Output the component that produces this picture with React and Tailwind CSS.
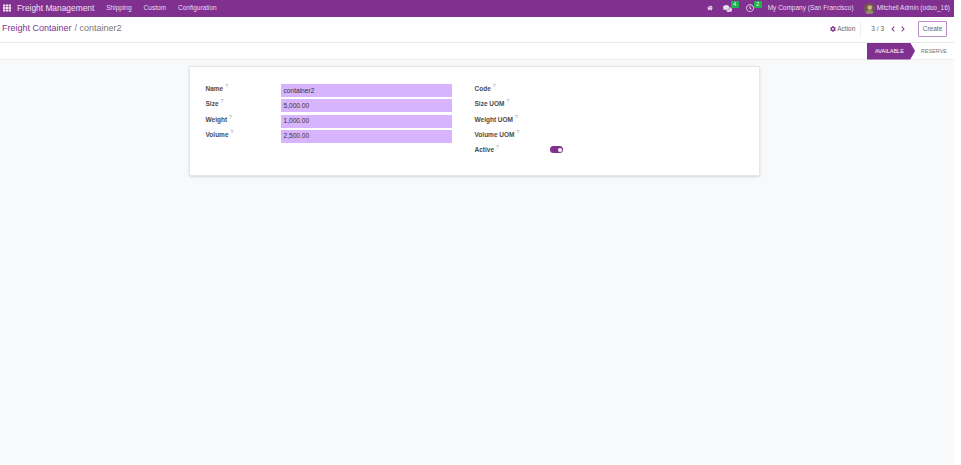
import React from "react";
import { FaCog, FaHome, FaComments, FaTh, FaChevronLeft, FaChevronRight, FaRegClock } from "react-icons/fa";

const leftFields = [
  { label: "Name", value: "container2" },
  { label: "Size", value: "5,000.00" },
  { label: "Weight", value: "1,000.00" },
  { label: "Volume", value: "2,500.00" },
];
const rightFields = ["Code", "Size UOM", "Weight UOM", "Volume UOM"];

const Label = ({ text }) => (
  <span className="flex items-start mt-[1px] text-[6.5px] font-bold text-[#4c4c4c] leading-[8px]">
    {text}
    <span className="text-[#8fa9ba] font-normal text-[5px] leading-[5px] ml-[2px] -mt-[1px]">?</span>
  </span>
);

const Badge = ({ n }) => (
  <span className="absolute -top-[3px] left-[8px] w-[8px] h-[7px] bg-[#22b24c] text-white text-[5px] leading-[7px] text-center rounded-[1px]">
    {n}
  </span>
);

const App = () => {
  return (
    <div className="w-[961px] h-[465px] bg-white flex font-['Liberation_Sans',sans-serif] overflow-hidden">
      <div className="w-[954px] h-[464px] flex flex-col">
        {/* Navbar */}
        <div className="h-[17px] bg-[#80308f] text-white flex items-center shrink-0 pl-[3px] pr-[4px] pb-[1px]">
          <FaTh size={8} className="text-[#f3e6f5]" />
          <span className="ml-[6px] text-[8.4px] text-[#f0e2f2]">Freight Management</span>
          <div className="flex ml-[12px] gap-[12px] text-[6.5px] text-[#ecdcef]">
            <span>Shipping</span>
            <span>Custom</span>
            <span>Configuration</span>
          </div>
          <div className="ml-auto flex items-center text-[6.5px] text-[#ecdcef]">
            <FaHome size={6} />
            <span className="relative ml-[10px] w-[9px] h-[8px] flex items-center">
              <FaComments size={9} />
              <Badge n="4" />
            </span>
            <span className="relative ml-[14px] w-[8px] h-[8px] flex items-center">
              <FaRegClock size={8} />
              <Badge n="2" />
            </span>
            <span className="ml-[14px]">My Company (San Francisco)</span>
            <svg className="ml-[10px]" width="11" height="11" viewBox="0 0 11 11">
              <circle cx="5.5" cy="5.5" r="5.5" fill="#6f5a46" />
              <circle cx="5.8" cy="4.6" r="2.4" fill="#cdb08f" />
              <path d="M1.5 10c.6-2.4 2.2-3 4-3s3.4.6 4 3l-2 1h-4z" fill="#8f8a6a" />
            </svg>
            <span className="ml-[2px]">Mitchell Admin (odoo_16)</span>
          </div>
        </div>

        {/* Breadcrumb row */}
        <div className="h-[26px] flex items-center border-b border-[#e8e8e8] shrink-0 pl-[2px] pr-[7px] pb-[2px]">
          <span className="text-[9px] text-[#80308f]">Freight Container</span>
          <span className="text-[9px] text-[#777] ml-[3px]">/ container2</span>
          <div className="ml-auto flex items-center">
            <FaCog size={6} className="text-[#80308f]" />
            <span className="ml-[1px] text-[6.5px] text-[#666]">Action</span>
            <span className="w-px h-[16px] bg-[#eee] ml-[5px]" />
            <span className="ml-[10px] text-[6.5px] text-[#666]">3 / 3</span>
            <FaChevronLeft size={6} className="ml-[6px] text-[#80308f]" />
            <FaChevronRight size={6} className="ml-[4px] text-[#80308f]" />
            <span className="ml-[12px] w-[29px] h-[16px] border border-[#b98cc3] rounded-[1px] text-[6.5px] text-[#666] flex items-center justify-center">
              Create
            </span>
          </div>
        </div>

        {/* Status row */}
        <div className="h-[17px] flex justify-end items-center border-b border-[#eee] shrink-0 pr-[7px]">
          <span className="w-[48px] h-[17px] bg-[#80308f] text-white text-[5.5px] flex items-center pl-[8px] [clip-path:polygon(0_0,90%_0,100%_50%,90%_100%,0_100%)]">
            AVAILABLE
          </span>
          <span className="w-[32px] text-right text-[5.5px] text-[#777]">RESERVE</span>
        </div>

        {/* Sheet */}
        <div className="flex-1 bg-[#f8f9fa] flex justify-center items-start pt-[6px] pr-[6px]">
          <div className="w-[571px] h-[110px] bg-white border border-[#e6e6e6] shadow-sm flex pt-[17px] pl-[16px]">
            <div className="w-[246px] flex flex-col gap-[2px]">
              {leftFields.map((field) => (
                <div key={field.label} className="flex items-start h-[13.3px]">
                  <div className="w-[75px]"><Label text={field.label} /></div>
                  <div className="w-[171px] h-[13px] bg-[#d8b4fe] text-[6.6px] text-[#333] pl-[3px] flex items-center">
                    {field.value}
                  </div>
                </div>
              ))}
            </div>
            <div className="ml-[23px] flex flex-col gap-[2px]">
              {rightFields.map((label) => (
                <div key={label} className="h-[13.3px] flex items-start">
                  <Label text={label} />
                </div>
              ))}
              <div className="h-[13.3px] flex items-start">
                <div className="w-[75px]"><Label text="Active" /></div>
                <span className="w-[13px] h-[7px] mt-[1px] bg-[#80308f] rounded-full flex justify-end items-center pr-[1px]">
                  <span className="w-[4px] h-[4px] bg-white rounded-full" />
                </span>
              </div>
            </div>
          </div>
        </div>
      </div>
    </div>
  );
};

export default App;
